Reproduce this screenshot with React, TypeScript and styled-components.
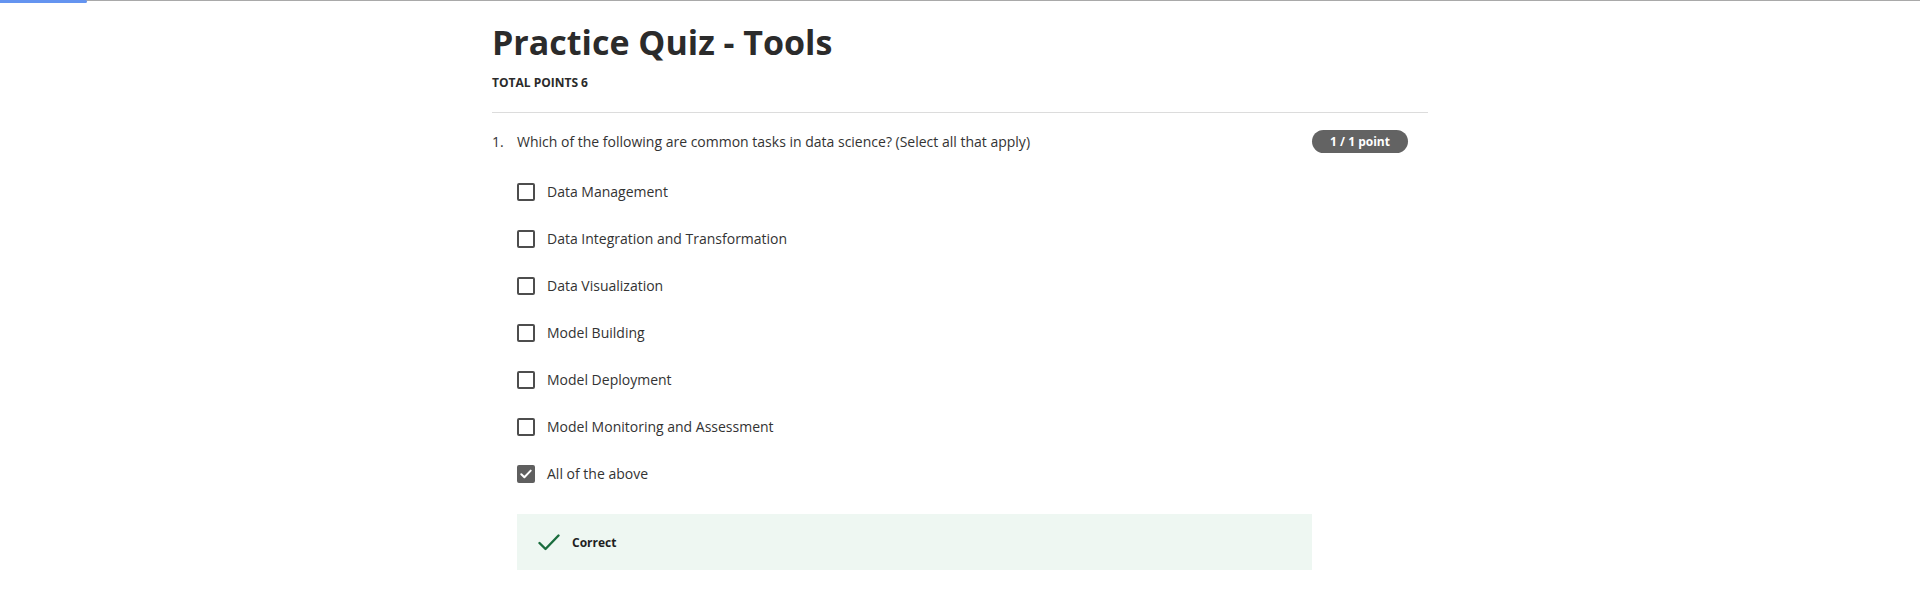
import React from "react";
import styled, { createGlobalStyle } from "styled-components";

const GlobalStyle = createGlobalStyle`
  html, body {
    margin: 0;
    padding: 0;
    background: #ffffff;
  }
  body {
    font-family: "Open Sans", "Noto Sans", sans-serif;
    color: #333333;
  }
  * { box-sizing: border-box; }
`;

const ProgressTrack = styled.div`
  height: 1px;
  background: #a9a9a9;
  overflow: visible;
`;

const ProgressFill = styled.div<{ $width: number }>`
  width: ${(p) => p.$width}px;
  height: 3px;
  background: #6494f0;
  border-radius: 0 2px 2px 0;
`;

const Page = styled.main`
  width: 936px;
  margin: 0 auto;
  padding-top: 20px;
`;

const Title = styled.h1`
  margin: 0;
  font-size: 34px;
  line-height: 42px;
  font-weight: 700;
  color: #2b2b2b;
`;

const TotalPoints = styled.div`
  margin-top: 12px;
  font-size: 12px;
  line-height: 16px;
  font-weight: 700;
  color: #2b2b2b;
  text-transform: uppercase;
`;

const Divider = styled.hr`
  margin: 21px 0 0;
  border: 0;
  height: 1px;
  background: #dcdcdc;
`;

const Question = styled.section`
  display: grid;
  grid-template-columns: 25px 1fr auto;
  column-gap: 0;
  padding: 17px 20px 0 0;
`;

const Number = styled.div`
  font-size: 14px;
  line-height: 23px;
  color: #333333;
`;

const Prompt = styled.div`
  font-size: 14px;
  line-height: 23px;
  color: #333333;
`;

const PointsBadge = styled.div`
  width: 96px;
  height: 23px;
  border-radius: 12px;
  background: #636363;
  color: #ffffff;
  font-size: 12px;
  font-weight: 700;
  display: flex;
  align-items: center;
  justify-content: center;
`;

const Body = styled.div`
  grid-column: 2 / 3;
  padding-top: 29px;
  display: flex;
  flex-direction: column;
`;

const OptionList = styled.div`
  display: flex;
  flex-direction: column;
  gap: 27px;
`;

const OptionRow = styled.label`
  display: flex;
  align-items: center;
  gap: 12px;
  height: 20px;
  font-size: 14px;
  line-height: 20px;
  color: #333333;
`;

const Box = styled.span<{ $checked: boolean }>`
  width: 18px;
  height: 18px;
  border-radius: 2px;
  border: 2px solid ${(p) => (p.$checked ? "#5f5f5f" : "#4d4d4d")};
  background: ${(p) => (p.$checked ? "#5f5f5f" : "#ffffff")};
  display: flex;
  align-items: center;
  justify-content: center;
  flex: none;
`;

const Feedback = styled.div`
  margin-top: 30px;
  height: 56px;
  background: #eef7f2;
  display: flex;
  align-items: center;
  gap: 12px;
  padding-left: 21px;
`;

const FeedbackText = styled.span`
  font-size: 12px;
  font-weight: 700;
  color: #1f1f1f;
`;

const options = [
  { label: "Data Management", checked: false },
  { label: "Data Integration and Transformation", checked: false },
  { label: "Data Visualization", checked: false },
  { label: "Model Building", checked: false },
  { label: "Model Deployment", checked: false },
  { label: "Model Monitoring and Assessment", checked: false },
  { label: "All of the above", checked: true },
];

function Checkbox({ checked }: { checked: boolean }) {
  return (
    <Box $checked={checked}>
      {checked && (
        <svg width="12" height="10" viewBox="0 0 12 10" fill="none">
          <path d="M1.3 5.2 L4.4 8.2 L10.7 1.6" stroke="#ffffff" strokeWidth="2" strokeLinecap="round" strokeLinejoin="round" />
        </svg>
      )}
    </Box>
  );
}

export default function App() {
  return (
    <>
      <GlobalStyle />
      <ProgressTrack>
        <ProgressFill $width={87} />
      </ProgressTrack>
      <Page>
        <Title>Practice Quiz - Tools</Title>
        <TotalPoints>Total points 6</TotalPoints>
        <Divider />
        <Question>
          <Number>1.</Number>
          <Prompt>Which of the following are common tasks in data science? (Select all that apply)</Prompt>
          <PointsBadge>1 / 1 point</PointsBadge>
          <Body>
            <OptionList>
              {options.map((o) => (
                <OptionRow key={o.label}>
                  <Checkbox checked={o.checked} />
                  <span>{o.label}</span>
                </OptionRow>
              ))}
            </OptionList>
            <Feedback>
              <svg width="22" height="17" viewBox="0 0 22 17" fill="none">
                <path d="M1.5 9 L7.5 15 L20.5 1.5" stroke="#1a6d3e" strokeWidth="2.4" strokeLinecap="round" strokeLinejoin="round" />
              </svg>
              <FeedbackText>Correct</FeedbackText>
            </Feedback>
          </Body>
        </Question>
      </Page>
    </>
  );
}
